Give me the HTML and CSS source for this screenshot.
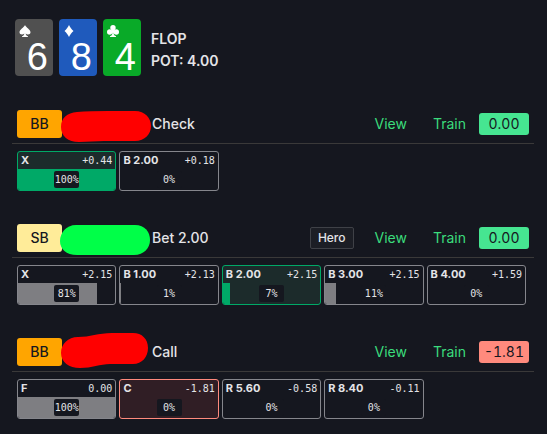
FILE: index.html
```
<!DOCTYPE html>
<html lang="en">
<head>
    <meta charset="UTF-8" />
    <meta name="viewport" content="width=device-width,initial-scale=1.0" />
    <title>Hand History</title>
    <link rel="stylesheet" href="styles.css">
</head>
<body>

    <header class="board">
        <div class="card spade">
            <svg class="suit" viewBox="0 0 12 12"><path d="M6 0C5 2.4.5 4.6.5 7.2c0 2.4 3.300 3 4.800 1.200-.1 1.500-.9 2.500-2.300 2.800v.8h6v-.8C7.600 10.900 6.800 9.900 6.700 8.400c1.500 1.800 4.800 1.200 4.800-1.200C11.500 4.600 7 2.400 6 0z"/></svg>
            <span class="rank">6</span>
        </div>
        <div class="card diamond">
            <svg class="suit" viewBox="0 0 12 12"><path d="M6 0C7.200 2.400 8.600 4.300 10.500 6 8.600 7.700 7.200 9.600 6 12 4.800 9.600 3.400 7.700 1.500 6 3.400 4.300 4.800 2.400 6 0z"/></svg>
            <span class="rank">8</span>
        </div>
        <div class="card club">
            <svg class="suit" viewBox="0 0 12 12"><circle cx="6" cy="2.700" r="2.700"/><circle cx="2.700" cy="7" r="2.700"/><circle cx="9.300" cy="7" r="2.700"/><path d="M5 4h2l.5 3-.8 1c0 1.900.9 2.900 2.300 3.200v.8H3v-.8c1.400-.3 2.300-1.300 2.300-3.200l-.8-1z"/></svg>
            <span class="rank">4</span>
        </div>
        <div class="street">
            <div>FLOP</div>
            <div>POT: 4.00</div>
        </div>
    </header>

    <main class="moves">
        <section class="move">
            <div class="move-head">
                <span class="position bb">BB</span>
                <svg class="name red" viewBox="0 0 90 28"><path d="M15 2Q28 1 46 1L73 1C83 1 89 8 89 16S83 31 73 31L42 31 17 32C6 32-1 26-1 17S5 3 15 2z"/></svg>
                <span class="played">Check</span>
                <a class="link" href="#view">View</a>
                <a class="link" href="#train">Train</a>
                <span class="score good">0.00</span>
            </div>
            <div class="options">
                <div class="option best">
                    <div class="label"><b>X</b><span>+0.44</span></div>
                    <div class="freq"><div class="bar" style="width: 100%"></div><span>100%</span></div>
                </div>
                <div class="option">
                    <div class="label"><b>B 2.00</b><span>+0.18</span></div>
                    <div class="freq"><div class="bar" style="width: 0%"></div><span>0%</span></div>
                </div>
            </div>
        </section>

        <section class="move">
            <div class="move-head">
                <span class="position sb">SB</span>
                <svg class="name green" viewBox="0 0 90 28"><path d="M14 1H73C83 1 88 8 88 16S82 31 72 31H15C4 31-2 25-2 17S4 1 14 1z"/></svg>
                <span class="played">Bet 2.00</span>
                <span class="hero">Hero</span>
                <a class="link" href="#view">View</a>
                <a class="link" href="#train">Train</a>
                <span class="score good">0.00</span>
            </div>
            <div class="options">
                <div class="option">
                    <div class="label"><b>X</b><span>+2.15</span></div>
                    <div class="freq"><div class="bar" style="width: 81%"></div><span>81%</span></div>
                </div>
                <div class="option">
                    <div class="label"><b>B 1.00</b><span>+2.13</span></div>
                    <div class="freq"><div class="bar" style="width: 1%"></div><span>1%</span></div>
                </div>
                <div class="option best">
                    <div class="label"><b>B 2.00</b><span>+2.15</span></div>
                    <div class="freq"><div class="bar" style="width: 7%"></div><span>7%</span></div>
                </div>
                <div class="option">
                    <div class="label"><b>B 3.00</b><span>+2.15</span></div>
                    <div class="freq"><div class="bar" style="width: 11%"></div><span>11%</span></div>
                </div>
                <div class="option">
                    <div class="label"><b>B 4.00</b><span>+1.59</span></div>
                    <div class="freq"><div class="bar" style="width: 0%"></div><span>0%</span></div>
                </div>
            </div>
        </section>

        <section class="move">
            <div class="move-head">
                <span class="position bb">BB</span>
                <svg class="name red" viewBox="0 0 90 28"><path d="M16-1C28-1 36-5 50-5L71-5C80-5 86 1 86 10S80 26 71 26H48C38 26 30 30 18 30 7 30-1 24-1 15S6-1 16-1z"/></svg>
                <span class="played">Call</span>
                <a class="link" href="#view">View</a>
                <a class="link" href="#train">Train</a>
                <span class="score bad">-1.81</span>
            </div>
            <div class="options">
                <div class="option">
                    <div class="label"><b>F</b><span>0.00</span></div>
                    <div class="freq"><div class="bar" style="width: 100%"></div><span>100%</span></div>
                </div>
                <div class="option mistake">
                    <div class="label"><b>C</b><span>-1.81</span></div>
                    <div class="freq"><div class="bar" style="width: 0%"></div><span>0%</span></div>
                </div>
                <div class="option">
                    <div class="label"><b>R 5.60</b><span>-0.58</span></div>
                    <div class="freq"><div class="bar" style="width: 0%"></div><span>0%</span></div>
                </div>
                <div class="option">
                    <div class="label"><b>R 8.40</b><span>-0.11</span></div>
                    <div class="freq"><div class="bar" style="width: 0%"></div><span>0%</span></div>
                </div>
            </div>
        </section>
    </main>

</body>
</html>
```
FILE: styles.css
```
* {
    box-sizing: border-box;
}

body {
    margin: 0;
    padding: 19px 13px 12px 12px;
    background: #15171f;
    color: #e4e4e7;
    font-family: Inter, "Liberation Sans", sans-serif;
    font-size: 14px;
    line-height: 22px;
}

.board {
    display: flex;
    gap: 6px;
    padding-left: 3px;
}

.card {
    display: flex;
    flex-direction: column;
    width: 38px;
    height: 57px;
    padding: 6px 5px 0 4px;
    border-radius: 4px;
    color: white;
}

.spade {
    background: #505050;
}

.diamond {
    background: #1f5abc;
}

.club {
    background: #09aa28;
}

.suit {
    flex: none;
    width: 12px;
    height: 12px;
    fill: white;
}

.rank {
    align-self: flex-end;
    font-family: "Liberation Sans", sans-serif;
    font-size: 38px;
    line-height: 40px;
}

.street {
    padding: 9px 0 0 4px;
    font-weight: 600;
}

.moves {
    display: flex;
    flex-direction: column;
    gap: 33px;
    margin-top: 34px;
}

.move-head {
    display: flex;
    align-items: center;
    padding: 0 5px 5px;
    border-bottom: 1px solid #3a3939;
}

.position {
    width: 45px;
    border-radius: 3px;
    color: #15171f;
    font-weight: 500;
    line-height: 28px;
    text-align: center;
}

.bb {
    background: #ffa500;
}

.sb {
    background: #ffec99;
}

.name {
    width: 90px;
    height: 28px;
    overflow: visible;
}

.red {
    fill: #ff0000;
}

.green {
    fill: #00ff48;
}

.played {
    flex: 1;
    font-weight: 500;
}

.hero {
    padding: 0 7px;
    margin-right: 21px;
    border: 1px solid #3f4147;
    border-radius: 2px;
    background: #1c1e25;
    font-size: 12px;
    font-weight: 500;
    line-height: 20px;
}

.link {
    margin-right: 26px;
    color: #3bdc7c;
    text-decoration: none;
}

.link + .link {
    margin-right: 13px;
}

.score {
    width: 50px;
    border-radius: 3px;
    color: #15171f;
    font-variant-numeric: tabular-nums;
    text-align: center;
}

.good {
    background: #46e591;
}

.bad {
    background: #ff8a7d;
}

.options {
    display: grid;
    grid-template-columns: repeat(5, 1fr);
    gap: 3px;
    padding: 7px 8px 0 5px;
}

.option {
    border: 1px solid #85868c;
    border-radius: 3px;
    overflow: hidden;
}

.label {
    display: flex;
    justify-content: space-between;
    padding: 0 3px;
    font-size: 11px;
    line-height: 17px;
}

.label span,
.freq span {
    font-family: "DejaVu Sans Mono", monospace;
    font-size: 10px;
}

.freq {
    display: grid;
    height: 21px;
    align-items: center;
}

.bar,
.freq span {
    grid-area: 1 / 1;
}

.bar {
    height: 100%;
    background: #7e7e82;
}

.freq span {
    justify-self: center;
    width: 25px;
    border-radius: 2px;
    background: #15171f;
    line-height: 17px;
    text-align: center;
}

.best {
    border-color: #00a967;
    background: #1c2b2b;
}

.best .bar {
    background: #00a967;
}

.mistake {
    border-color: #ff8a7d;
    background: #301e25;
}
```
